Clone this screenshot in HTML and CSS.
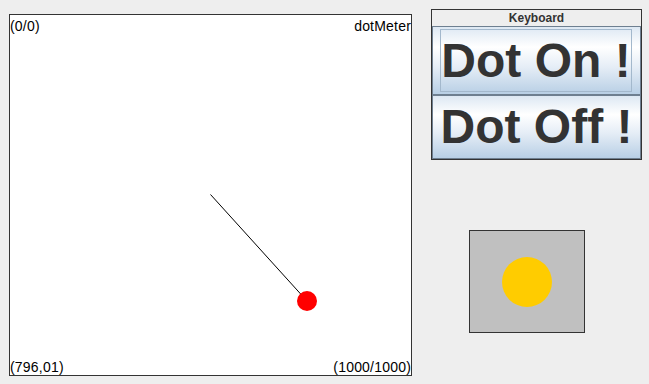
FILE: index.html
```html
<!DOCTYPE html>
<html lang="en">
<head>
    <meta charset="UTF-8">
    <meta name="viewport" content="width=device-width, initial-scale=1.0">
    <title>dotMeter</title>
    <link rel="stylesheet" href="styles.css">
</head>
<body>
    <div class="page">
        <div class="meter">
            <svg class="meter-plot" width="401" height="360" viewBox="0 0 401 360">
                <line x1="200.5" y1="179.5" x2="297" y2="286" stroke="#000" stroke-width="1"/>
                <circle cx="297" cy="286" r="10" fill="#ff0000"/>
            </svg>
            <div class="meter-row">
                <span>(0/0)</span>
                <span>dotMeter</span>
            </div>
            <div class="meter-row">
                <span>(796,01)</span>
                <span>(1000/1000)</span>
            </div>
        </div>
        <div class="side">
            <div class="keyboard">
                <div class="keyboard-title">Keyboard</div>
                <button class="key key-focus"><span>Dot On !</span></button>
                <button class="key">Dot Off !</button>
            </div>
            <div class="lamp">
                <div class="lamp-dot"></div>
            </div>
        </div>
    </div>
</body>
</html>
```

FILE: styles.css
```css
body {
    margin: 0;
    background-color: #eeeeee;
    font-family: "Liberation Sans", Arial, sans-serif;
}
.page {
    display: flex;
    align-items: flex-start;
    gap: 19px;
    padding: 9px 0 0 9px;
}
.meter {
    position: relative;
    box-sizing: border-box;
    width: 403px;
    height: 362px;
    margin-top: 5px;
    border: 1px solid #333;
    background-color: #fff;
    display: flex;
    flex-direction: column;
    justify-content: space-between;
    font-size: 14px;
    letter-spacing: 0.2px;
    color: #000;
}
.meter-plot {
    position: absolute;
    top: 0;
    left: 0;
}
.meter-row {
    position: relative;
    display: flex;
    justify-content: space-between;
    line-height: 16px;
    padding: 3px 0 0 0;
}
.meter-row:last-child {
    padding: 0 0 0 0;
    line-height: 15px;
}
.side {
    display: flex;
    flex-direction: column;
    gap: 70px;
}
.keyboard {
    box-sizing: border-box;
    width: 211px;
    height: 151px;
    border: 1px solid #333;
    display: flex;
    flex-direction: column;
}
.keyboard-title {
    height: 16px;
    line-height: 17px;
    text-align: center;
    font-size: 12px;
    font-weight: bold;
    color: #333;
}
.key {
    flex: 1;
    margin: 0;
    padding: 0;
    border: 1px solid #6e7f90;
    background: linear-gradient(#dde8f3 0%, #ffffff 30%, #e5edf6 60%, #b8cfe5 100%);
    font-family: "Liberation Sans", Arial, sans-serif;
    font-size: 48px;
    font-weight: bold;
    color: #333;
    display: flex;
    align-items: center;
    justify-content: center;
}
.key-focus {
    padding: 2px 8px 2px 7px;
}
.key-focus span {
    flex: 1;
    align-self: stretch;
    display: flex;
    align-items: center;
    justify-content: center;
    border: 1px solid #a3b8cc;
}
.lamp {
    box-sizing: border-box;
    width: 116px;
    height: 103px;
    margin-left: 38px;
    border: 1px solid #333;
    background-color: #c0c0c0;
    display: flex;
    align-items: center;
    justify-content: center;
}
.lamp-dot {
    width: 50px;
    height: 50px;
    border-radius: 50%;
    background-color: #ffcc00;
}
```
